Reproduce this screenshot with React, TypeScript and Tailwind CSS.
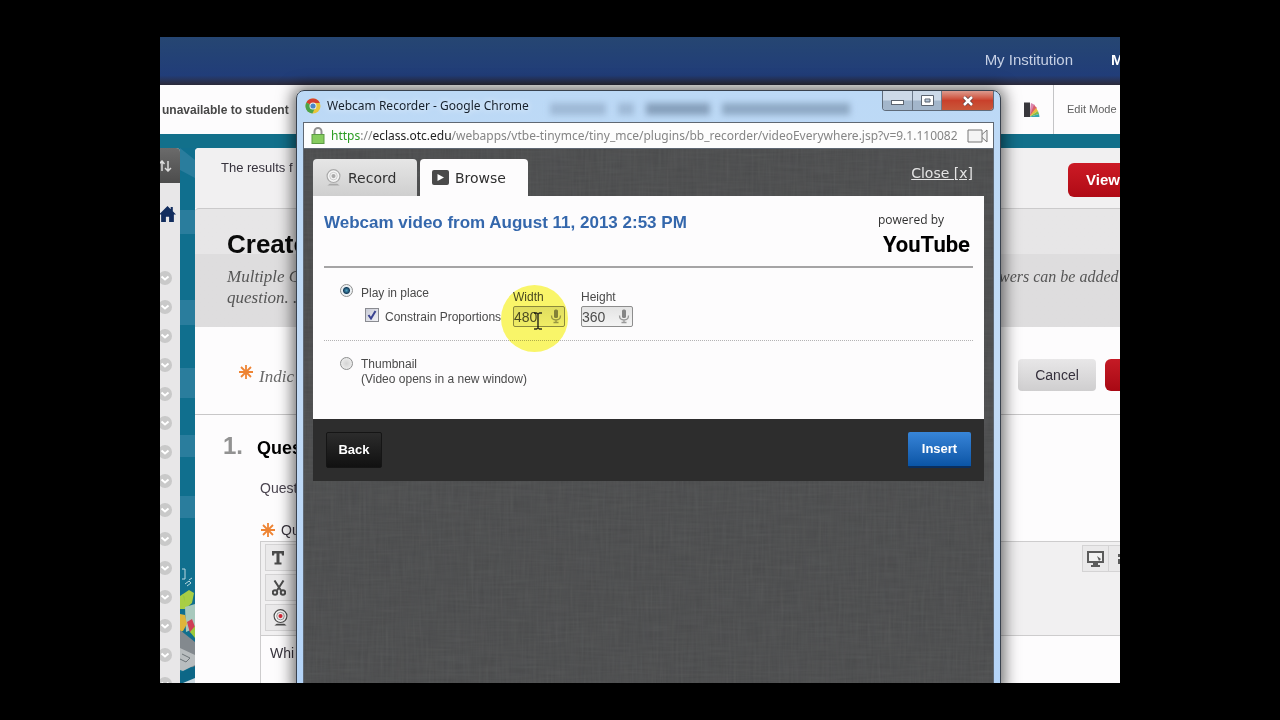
import { useState } from "react";
import type { ReactNode } from "react";

const sidebarItems = Array.from({ length: 15 }, (_, i) => i);

const Asterisk = () => (
  <svg viewBox="0 0 14 14" className="size-3.5 shrink-0" stroke="#ee8434" strokeWidth="1.800" aria-hidden="true">
    <path d="M7 0v5.500M7 8.500V14M0 7h14M2 2l10 10M12 2L2 12" />
  </svg>
);

const ChromeLogo = () => (
  <svg viewBox="0 0 16 16" className="size-4 shrink-0" aria-hidden="true">
    <circle cx="8" cy="8" r="7.500" fill="#e8c53a" />
    <path d="M8 8L1.300 4.600A7.500 7.500 0 0 1 14.800 5H8z" fill="#d6402f" />
    <path d="M1.300 4.600A7.500 7.500 0 0 0 7.400 15.500L10 10 8 8z" fill="#4ba34a" />
    <circle cx="8" cy="8" r="3.500" fill="#f4f4f4" />
    <circle cx="8" cy="8" r="2.600" fill="#4a86c8" />
  </svg>
);

const MicIcon = () => (
  <svg viewBox="0 0 12 15" className="h-[15px] w-3 pointer-events-none" aria-hidden="true">
    <rect x="4" y="0.500" width="4" height="8.500" rx="1.500" fill="#858585" />
    <path d="M1.500 6.500c0 6 9 6 9 0M6 11v2.500M3.500 13.500h5" fill="none" stroke="#9a9a9a" strokeWidth="1.300" />
  </svg>
);

const Webcam = ({ dot, className }: { dot: string; className: string }) => (
  <svg viewBox="0 0 18 18" className={className} fill="none" aria-hidden="true">
    <circle cx="9" cy="7.500" r="6.800" fill="#f4f4f4" stroke="currentColor" strokeWidth="1.200" />
    <circle cx="9" cy="7.500" r="4" stroke="currentColor" strokeWidth="0.800" opacity="0.700" />
    <circle cx="9" cy="7.500" r="2.200" fill={dot} />
    <path d="M5 15.500h8l2.500 2h-13z" fill="currentColor" />
  </svg>
);

/* Top navigation and course bar */
const SiteHeader = () => (
  <header className="shrink-0">
    <nav className="flex h-12 justify-end bg-linear-to-b from-[#264672] via-[#213d79] via-80% to-[#2b2a3a] pt-3 text-[15px] leading-[22px]">
      <a href="#institution" className="text-[#c6d0e4]">My Institution</a>
      <a href="#main" className="ml-[38px] w-[9px] overflow-hidden font-bold text-white">M</a>
    </nav>
    <div className="flex h-[49px] items-center bg-[#fdfcfd]">
      <p className="pl-0.5 text-xs font-bold text-[#474747]">unavailable to student</p>
      <svg viewBox="0 0 16 16" className="ml-auto size-4" aria-hidden="true">
        <path d="M5 15L7 1l4 2z" fill="#d987b0" />
        <path d="M5 15l5-12 3 3z" fill="#d95f6a" />
        <path d="M5 15l7-9 2 3z" fill="#e8b93e" />
        <path d="M5 15l9-6 1 3z" fill="#7cbc4c" />
        <path d="M5 15l10-3 .5 3z" fill="#36a5b0" />
        <path d="M0 .5h6V15H0z" fill="#38373c" />
      </svg>
      <div className="ml-[13px] flex h-full w-[67px] items-center border-l border-[#c4c4c6] pl-[13px] text-[11px] text-[#606060]">
        <span className="whitespace-nowrap">Edit Mode</span>
      </div>
    </div>
  </header>
);

const Sidebar = () => (
  <aside className="w-5 shrink-0 overflow-hidden rounded-tr bg-[#e8e7e8]">
    <button type="button" aria-label="Reorder" className="flex h-[35px] w-full items-center bg-linear-to-b from-[#6b6b6b] to-[#4c4c4c] text-[#dcdcdc]">
      <svg viewBox="0 0 12 12" className="size-3" fill="none" stroke="currentColor" strokeWidth="1.500" aria-hidden="true">
        <path d="M2 11V1M-1 4L2 1l2.500 3M8 1v9.500M5 8l3 3 3-3" />
      </svg>
    </button>
    <a href="#home" aria-label="Home" className="flex h-[62px] items-center text-[#122d5e]">
      <svg viewBox="0 0 16 16" className="-ml-px size-[17px]" fill="currentColor" aria-hidden="true">
        <path d="M8 0L0 8h2v7h4.500v-5h3v5H14V8h2l-3-3V1h-2v2z" />
      </svg>
    </a>
    <ul className="pt-[26px]">
      {sidebarItems.map((item) => (
        <li key={item} className="h-[29px]">
          <svg viewBox="0 0 14 14" className="-ml-0.5 size-3.5" aria-hidden="true">
            <circle cx="7" cy="7" r="7" fill="#c9c9c9" />
            <path d="M3.500 5.500L7 8.500l3.500-3" fill="none" stroke="#fff" strokeWidth="2" />
          </svg>
        </li>
      ))}
    </ul>
  </aside>
);

/* Teal wallpaper strip between the sidebar and the page */
const Wallpaper = () => (
  <svg viewBox="0 0 15 535" preserveAspectRatio="xMidYMin slice" className="w-[15px] shrink-0 self-start" aria-hidden="true">
    <rect width="15" height="535" fill="#106f8e" />
    <g fill="#2a7d9d">
      <path d="M0 0l15 12v18L0 22zM0 62h15v24H0zM0 152h15v25H0zM0 220h15v30H0zM0 287h15v22H0zM0 348h15v22H0z" />
    </g>
    <path d="M2 421h3v10H2M5 436l4-3 2 2-4 3M9 432l3-2" fill="none" stroke="#b9d7df" />
    <path d="M0 448l9-6 5 3-2 10-7 6H0z" fill="#a8ce45" />
    <path d="M5 459l10-3v24l-9 4z" fill="#a8c9bd" />
    <path d="M0 466l5 1 2 9-4 7-3 1z" fill="#dfb53b" />
    <path d="M7 474l5-3 3 8-5 6z" fill="#cf3f56" />
    <path d="M10 484l5-6v12zM2 446l3 3v5z" fill="#9dca3d" />
    <path d="M0 482l15 12v27l-15-8z" fill="#83898e" />
    <path d="M0 500l15 7v10L3 523l-3-1z" fill="#b9bdbf" />
    <path d="M2 506l8 4-4 4-6-3" fill="none" stroke="#6e7579" />
    <path d="M0 525l15-7v17H0z" fill="#0d6787" />
    <path d="M3 535l12-5v5z" fill="#ccd9e0" />
  </svg>
);

const ToolButton = ({ label, children }: { label: string; children: ReactNode }) => (
  <button type="button" aria-label={label} className="flex h-[27px] w-9 items-center border border-[#d4d3d4] bg-[#eae9ea] pl-1.5 text-[#4b4b4b]">
    {children}
  </button>
);

const QuestionPage = () => (
  <main className="flex min-w-0 flex-1 flex-col overflow-hidden rounded-tl bg-[#fdfcfd]">
    <div className="flex h-[60px] shrink-0 items-start bg-[#f1f0f1]">
      <p className="pl-[26px] pt-2.5 text-[13px] leading-5 text-[#36323c]">The results f</p>
      <button type="button" className="ml-auto mt-[15px] h-[34px] w-[52px] overflow-hidden rounded-l-md bg-linear-to-b from-[#cc1a25] to-[#b00a15] pl-[18px] text-left text-[15px] font-bold text-white">
        View
      </button>
    </div>

    <section className="h-[119px] shrink-0 rounded-tl border-t border-[#cbcacb] bg-linear-to-b from-[#e7e6e7] from-[45px] to-[#dedddE] to-[45px]">
      <h1 className="pl-8 pt-[19px] text-[26px] font-bold leading-8 text-[#0a0a0a]">Create</h1>
      <div className="flex justify-between pt-1.5 font-['Liberation_Serif',serif] italic text-[#565656]">
        <p className="pl-8 text-[17px] leading-[21px]">
          Multiple C
          <br />
          question. .
        </p>
        <p className="w-[121px] overflow-hidden whitespace-nowrap text-base leading-[21px]">wers can be added</p>
      </div>
    </section>

    <div className="flex h-[88px] shrink-0 items-start border-b border-[#c8c7c8] pl-11 pt-8">
      <div className="flex gap-1.5 pt-1.5">
        <Asterisk />
        <p className="pt-0.5 font-['Liberation_Serif',serif] text-[17px] italic leading-5 text-[#6a6a6a]">Indic</p>
      </div>
      <button type="button" className="ml-auto h-8 w-[78px] rounded bg-linear-to-b from-[#e8e7e8] to-[#cfcecf] text-sm text-[#35303c]">
        Cancel
      </button>
      <button type="button" aria-label="Submit" className="ml-[9px] h-8 w-[15px] rounded-l-md bg-linear-to-b from-[#c51a25] to-[#a80813]" />
    </div>

    <h2 className="flex items-baseline gap-3.5 pl-7 pt-4 text-lg font-bold leading-[30px] text-black">
      <span className="text-2xl leading-[30px] text-[#929292]">1.</span>
      Ques
    </h2>
    <p className="pl-[65px] pt-[15px] text-sm leading-5 text-[#4b4550]">Quest</p>
    <div className="flex items-center gap-1.5 pl-[66px] pt-[22px] text-sm leading-5 text-[#37323c]">
      <Asterisk />
      <span>Qu</span>
    </div>

    <div className="ml-[65px] mt-px min-h-0 flex-1 border-l border-t border-[#cdcccd]">
      <div className="flex h-[94px] justify-between border-b border-[#cdcccd] bg-[#f1f0f1] pl-1 pt-0.5">
        <div className="flex flex-col gap-[3px]">
          <ToolButton label="Text">
            <svg viewBox="0 0 12 14" className="h-3.5 w-3" fill="currentColor" aria-hidden="true">
              <path d="M0 0h12v4.500h-2L9.500 2.500h-2V11.500H9.500V13.500H2.500V11.500H4.500V2.500h-2L2 4.500H0z" />
            </svg>
          </ToolButton>
          <ToolButton label="Cut">
            <svg viewBox="0 0 14 16" className="h-4 w-3.5" fill="none" stroke="currentColor" strokeWidth="2" aria-hidden="true">
              <path d="M2.500 0.500L9 10.500M11.500 0.500L5 10.500" />
              <circle cx="3" cy="12.500" r="2.200" />
              <circle cx="11" cy="12.500" r="2.200" />
            </svg>
          </ToolButton>
          <ToolButton label="Record from webcam">
            <Webcam dot="#d32837" className="size-[17px]" />
          </ToolButton>
        </div>
        <div className="flex pt-px">
          <button type="button" aria-label="Preview" className="flex h-[27px] w-[27px] items-center justify-center border border-[#d4d3d4] bg-[#eae9ea]">
            <svg viewBox="0 0 17 16" className="h-4 w-[17px]" aria-hidden="true">
              <rect x="1" y="1" width="15" height="10" fill="#f1f1f1" stroke="#5b5b5b" strokeWidth="2" />
              <path d="M10 5l4 3-2 2zM6 12h5v2h2v2H4v-2h2z" fill="#5b5b5b" />
            </svg>
          </button>
          <button type="button" aria-label="Help" className="flex h-[27px] w-[11px] items-center justify-end border-y border-[#d4d3d4] bg-[#eae9ea]">
            <svg viewBox="0 0 2 10" className="h-2.5 w-0.5" fill="#5b5b5b" aria-hidden="true">
              <path d="M0 0h2v3H0zM0 5h2v5H0z" />
            </svg>
          </button>
        </div>
      </div>
      <p className="pl-[9px] pt-[7px] text-sm leading-5 text-[#37333c]">Whi</p>
    </div>
  </main>
);

const TitleBar = () => (
  <div className="relative flex h-[31px] items-start justify-between pl-0.5">
    <div aria-hidden="true" className="absolute right-36 top-3 flex gap-3 blur-[3px]">
      <span className="h-3 w-14 bg-[#8ba4bf]/60" />
      <span className="h-3 w-4 bg-[#8ba4bf]/60" />
      <span className="h-3 w-16 bg-[#6f88a3]/70" />
      <span className="h-3 w-32 bg-[#6f88a3]/60" />
    </div>
    <div className="relative flex items-center gap-1.5 pt-1.5">
      <ChromeLogo />
      <h2 className="font-['Noto_Sans','Open_Sans',sans-serif] text-xs leading-[18px] text-[#16202c] [text-shadow:0_0_6px_white]">
        Webcam Recorder - Google Chrome
      </h2>
    </div>
    <div className="relative flex h-5 overflow-hidden rounded-b border border-t-0 border-[#5f6b7a]">
      <button type="button" aria-label="Minimize" className="flex w-[30px] items-center justify-center border-r border-[#6d7a8a] bg-linear-to-b from-[#ccd9e8] from-45% to-[#a3b6cb] to-55%">
        <svg viewBox="0 0 14 6" className="mt-1 h-1.5 w-3.5" aria-hidden="true">
          <rect x=".5" y=".5" width="12" height="4" fill="#fff" stroke="#5c6470" />
        </svg>
      </button>
      <button type="button" aria-label="Maximize" className="flex w-[29px] items-center justify-center border-r border-[#6d7a8a] bg-linear-to-b from-[#ccd9e8] from-45% to-[#a3b6cb] to-55%">
        <svg viewBox="0 0 13 11" className="h-[11px] w-[13px]" aria-hidden="true">
          <path d="M.5.500h12v10H.5zM4 4v3h5V4z" fill="#fff" fillRule="evenodd" stroke="#5c6470" />
        </svg>
      </button>
      <button type="button" aria-label="Close window" className="flex w-[51px] items-center justify-center bg-linear-to-b from-[#dc9a8e] via-[#c9402b] via-50% to-[#c9573a]">
        <svg viewBox="0 0 12 10" className="h-2.5 w-3" aria-hidden="true">
          <path d="M2 1l8 8M10 1L2 9" stroke="#5d3b3c" strokeWidth="4" />
          <path d="M2 1l8 8M10 1L2 9" stroke="#fff" strokeWidth="2.500" />
        </svg>
      </button>
    </div>
  </div>
);

const AddressBar = () => (
  <div className="flex h-[27px] shrink-0 items-center border-b border-t border-[#5f6873] bg-[#fdfdfd] pl-[7px] pr-1">
    <svg viewBox="0 0 14 17" className="mr-1.5 h-[17px] w-3.5 shrink-0" aria-hidden="true">
      <path d="M3.500 8V4.500a3.500 3.500 0 0 1 7 0V8" fill="none" stroke="#909090" strokeWidth="2" />
      <rect x="1" y="7.500" width="12" height="9" fill="#86cc5f" stroke="#5c9b45" />
    </svg>
    <p className="min-w-0 flex-1 overflow-hidden whitespace-nowrap font-['Noto_Sans','Open_Sans',sans-serif] text-xs leading-5 text-[#858585]">
      <span className="text-[#2b9c22]">https</span>://<span className="text-[#222]">eclass.otc.edu</span>
      /webapps/vtbe-tinymce/tiny_mce/plugins/bb_recorder/videoEverywhere.jsp?v=9.1.110082
    </p>
    <svg viewBox="0 0 22 14" className="h-3.5 w-[22px] shrink-0" fill="#f4f4f4" stroke="#777" aria-hidden="true">
      <path d="M1 1h14v12H1zM15 5.500l5-4.500v12l-5-4.500" />
    </svg>
  </div>
);

const SizeField = ({ id, label, value, onChange }: { id: string; label: string; value: string; onChange: (value: string) => void }) => (
  <div className="flex w-[52px] flex-col">
    <label htmlFor={id} className="leading-[18px]">{label}</label>
    <div className="flex h-[21px] items-center rounded-xs border border-[#8d8d8d] bg-linear-to-b from-[#e4e4e4] to-[#f4f4f4] pr-0.5">
      <input
        id={id}
        value={value}
        onChange={(e) => onChange(e.target.value)}
        className="w-0 min-w-0 flex-1 bg-transparent text-sm leading-4 text-[#4d4d4d] outline-none"
      />
      <MicIcon />
    </div>
  </div>
);

const RecorderPanel = () => {
  const [mode, setMode] = useState("place");
  const [constrain, setConstrain] = useState(true);
  const [width, setWidth] = useState("480");
  const [height, setHeight] = useState("360");

  const radio =
    "size-[13px] shrink-0 appearance-none rounded-full border border-[#8e8f8f] bg-[radial-gradient(circle,#d4d4d4,#f4f4f4)] checked:bg-[radial-gradient(circle,#4fa3c4_0,#163e5c_3px,#e8eef2_4px,#f4f4f4_6px)]";

  return (
    <div className="relative flex flex-col px-[9px] pt-2.5">
      <div className="flex items-start justify-between">
        <div role="tablist" className="flex gap-[3px] font-['DejaVu_Sans',sans-serif] text-sm text-[#303030]">
          <button type="button" role="tab" aria-selected="false" className="flex h-[37px] w-[104px] items-center gap-1.5 rounded-t bg-linear-to-b from-[#e6e6e6] to-[#cfcfcf] pl-3">
            <Webcam dot="#a9a9a9" className="size-[17px] text-[#a9a9a9]" />
            Record
          </button>
          <button type="button" role="tab" aria-selected="true" className="flex h-[37px] w-[108px] items-center gap-1.5 rounded-t bg-[#fdfcfd] pl-3">
            <svg viewBox="0 0 17 15" className="h-[15px] w-[17px]" aria-hidden="true">
              <rect width="17" height="15" rx="2" fill="#4a4a4a" />
              <path d="M5.500 4v7L12 7.500z" fill="#fff" />
            </svg>
            Browse
          </button>
        </div>
        <a href="#close" className="mr-[11px] mt-1 font-['DejaVu_Sans',sans-serif] text-sm leading-5 text-[#e4e4e4] underline">Close [x]</a>
      </div>

      <div className="bg-[#fdfcfd] px-[11px] pb-8 pt-[15px]">
        <div className="flex h-[57px] items-start justify-between border-b-2 border-[#a5a4a5]">
          <h3 className="text-[17px] font-bold leading-6 text-[#3467ac]">Webcam video from August 11, 2013 2:53 PM</h3>
          <div className="pr-[3px] text-right text-black">
            <p className="pr-[26px] font-['Open_Sans',sans-serif] text-xs leading-[18px] text-[#303030]">powered by</p>
            <p className="font-['Roboto',sans-serif] text-[22px] font-bold leading-8">YouTube</p>
          </div>
        </div>

        <div className="relative flex h-[73px] items-start border-b border-dotted border-[#b4b3b4] pl-4 pt-4 text-xs text-[#4a4a4a]">
          <div className="w-[173px] shrink-0">
            <label className="flex gap-2 leading-[18px]">
              <input type="radio" name="mode" checked={mode === "place"} onChange={() => setMode("place")} className={radio} />
              Play in place
            </label>
            <label className="mt-1.5 flex gap-1.5 whitespace-nowrap pl-[25px] leading-[18px]">
              <span className="grid size-3.5 shrink-0 place-items-center">
                <input
                  type="checkbox"
                  checked={constrain}
                  onChange={(e) => setConstrain(e.target.checked)}
                  className="peer col-start-1 row-start-1 size-3.5 appearance-none border border-[#8a8b91] bg-linear-to-br from-[#c9cbd6] to-[#f2f2f6]"
                />
                <svg viewBox="0 0 10 10" className="pointer-events-none col-start-1 row-start-1 size-2.5 opacity-0 peer-checked:opacity-100" fill="none" stroke="#3a4391" strokeWidth="2" aria-hidden="true">
                  <path d="M1.500 5l2.500 3.500L8.500 1" />
                </svg>
              </span>
              Constrain Proportions
            </label>
          </div>
          <div className="flex gap-4 pt-1">
            <SizeField id="width" label="Width" value={width} onChange={setWidth} />
            <SizeField id="height" label="Height" value={height} onChange={setHeight} />
          </div>

          {/* Pointer highlight */}
          <div aria-hidden="true" className="pointer-events-none absolute left-[177px] top-[17px] flex size-[67px] items-center justify-center rounded-full bg-[#fbf86a] pl-1.5 pt-1 mix-blend-multiply">
            <svg viewBox="0 0 8 18" className="h-[18px] w-2" fill="none" stroke="#35351f" strokeWidth="1.500">
              <path d="M0 1h2.500L4 2l1.500-1H8M4 2v14M0 17h2.500L4 16l1.500 1H8" />
            </svg>
          </div>
        </div>

        <label className="flex gap-2 pl-4 pt-4 text-xs leading-[15px] text-[#4a4a4a]">
          <input type="radio" name="mode" checked={mode === "thumb"} onChange={() => setMode("thumb")} className={radio} />
          <span>
            Thumbnail
            <br />
            (Video opens in a new window)
          </span>
        </label>
      </div>

      <div className="flex h-[62px] items-center justify-between bg-[#2d2d2d] px-[13px] text-[13px] font-bold text-white">
        <button type="button" className="h-9 w-14 rounded-xs border border-[#151515] bg-linear-to-b from-[#2c2c2c] to-[#111]">Back</button>
        <button type="button" className="h-9 w-[63px] rounded-xs border-b-2 border-[#0a2f5f] bg-linear-to-b from-[#3785d8] to-[#0a55a6]">Insert</button>
      </div>
    </div>
  );
};

/* Woven cloth behind the recorder */
const Cloth = () => (
  <svg className="absolute inset-0 size-full opacity-15" aria-hidden="true">
    <filter id="weft">
      <feTurbulence type="fractalNoise" baseFrequency="0.03 0.4" numOctaves="2" seed="4" />
      <feColorMatrix type="saturate" values="0.2" />
    </filter>
    <filter id="warp">
      <feTurbulence type="fractalNoise" baseFrequency="0.4 0.03" numOctaves="2" seed="9" />
      <feColorMatrix type="saturate" values="0.2" />
    </filter>
    <rect width="100%" height="100%" filter="url(#weft)" opacity="0.6" />
    <rect width="100%" height="100%" filter="url(#warp)" opacity="0.6" />
  </svg>
);

const PopupWindow = () => (
  <section className="absolute -bottom-2 left-[136px] right-[119px] top-[53px] flex flex-col rounded-t-lg border border-[#39424e] bg-linear-to-b from-[#bcd9f6] via-[#c3dbf5] to-[#b4d4f8] px-[7px] shadow-[0_0_16px_3px_rgba(0,0,0,0.6)]">
    <div className="-mx-px flex min-h-0 flex-1 flex-col">
      <TitleBar />
      <div className="flex min-h-0 flex-1 flex-col border-x border-[#5f6873]">
        <AddressBar />
        <div className="relative flex-1 overflow-hidden bg-[#474849]">
          <Cloth />
          <RecorderPanel />
        </div>
      </div>
    </div>
  </section>
);

const App = () => {
  return (
    <div className="flex h-screen min-h-[600px] flex-col bg-black px-[12.5%] py-[37px] font-['Liberation_Sans',Arial,sans-serif]">
      <div className="relative flex min-h-0 flex-1 flex-col overflow-hidden bg-[#12708b]">
        <SiteHeader />
        <div className="flex min-h-0 flex-1 pt-3.5">
          <Sidebar />
          <Wallpaper />
          <QuestionPage />
        </div>
        <PopupWindow />
      </div>
    </div>
  );
};

export default App;
